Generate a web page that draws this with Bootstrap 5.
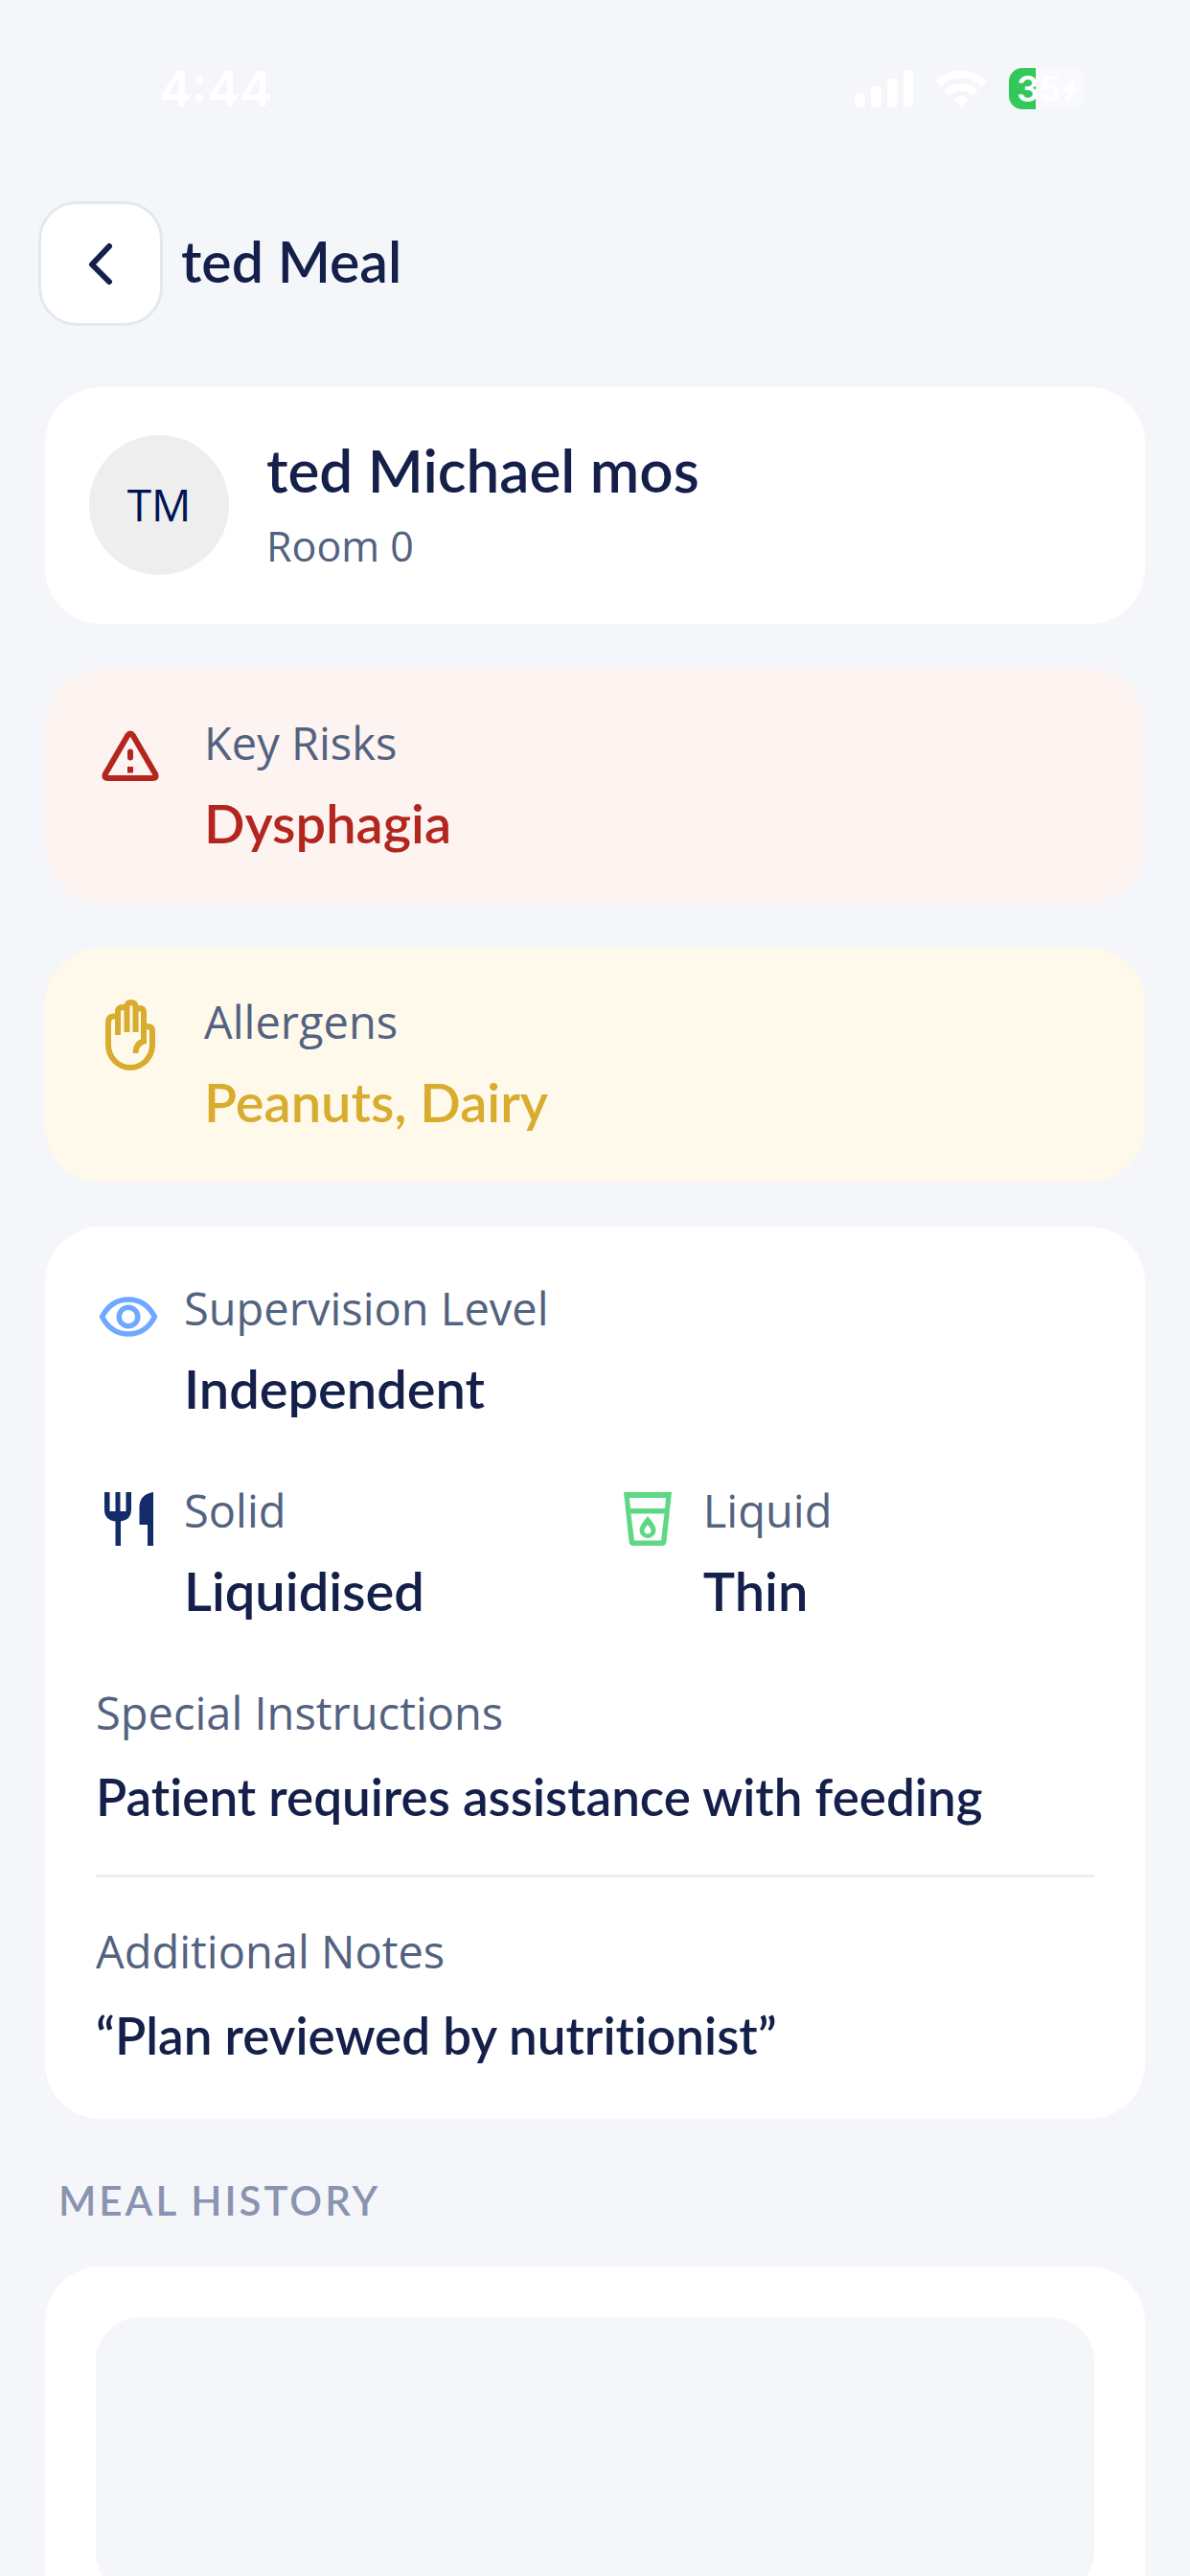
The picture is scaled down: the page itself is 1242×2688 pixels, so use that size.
<!DOCTYPE html>
<html lang="en">
<head>
<meta charset="utf-8">
<meta name="viewport" content="width=device-width, initial-scale=1">
<title>ted Meal</title>
<link href="https://cdn.jsdelivr.net/npm/bootstrap@5.3.0/dist/css/bootstrap.min.css" rel="stylesheet">
<style>
  :root { --ink: #14204a; --muted: #52627f; --page: #f4f6fa; }
  body { background: var(--page); color: var(--ink); font-family: Lato, "Open Sans", sans-serif; font-variant-ligatures: none; overflow-x: hidden; }
  .status-bar { height: 210px; padding: 63px 103px 0 166px; color: #fff; }
  .clock { font: 600 51px/60px Inter, sans-serif; }
  .status-icons { gap: 23px; padding-top: 8px; }
  .page-head { padding: 0 40px; gap: 19px; margin-bottom: 64px; }
  .back-btn { width: 130px; height: 130px; border: 3px solid #e2e8f0; border-radius: 40px; background: #fff; }
  .back-btn:hover { background: #f8fafc; border-color: #e2e8f0; }
  .page-title { font-size: 59px; line-height: 72px; font-weight: 600; padding-bottom: 4px; }
  .stack { padding: 0 47px; }
  .panel { background: #fff; border-radius: 58px; margin-bottom: 47px; }
  .person { padding: 50px 46px 51px; gap: 39px; }
  .avatar { width: 146px; height: 146px; background: #eee; color: #001452; font: 400 46px/60px "Open Sans", sans-serif; padding-bottom: 2px; }
  .person-name { font-size: 62px; line-height: 72px; font-weight: 600; margin-bottom: 16px; }
  .room { font: 400 43px/56px "Open Sans", sans-serif; color: var(--muted); }
  .alert-panel { padding: 45px 53px 47px; gap: 41px; }
  .alert-icon { width: 72px; height: 92px; }
  .risk { background: #fdf3f1; }
  .risk .item-value, .risk .alert-icon { color: #b3261e; }
  .allergen { background: #fff9eb; }
  .allergen .item-value, .allergen .alert-icon { color: #d8ac2e; }
  .item-label { font: 400 47px/64px "Open Sans", sans-serif; color: var(--muted); margin-bottom: 16px; }
  .item-value { font-size: 56px; line-height: 72px; font-weight: 600; margin: 0; }
  .plan { padding: 53px 53px 51px; }
  .item { gap: 24px; margin-bottom: 59px; }
  .item-icon { width: 68px; height: 82px; }
  .first-half { width: 52%; }
  .note .item-label { margin-bottom: 20px; }
  .note .item-value { font-size: 53px; }
  .rule { height: 3px; background: #ececec; margin: 45px 0 45px; border: 0; opacity: 1; }
  .section-title { font-size: 42px; line-height: 60px; font-weight: 600; letter-spacing: 3px; color: #8a94b0; margin: 55px 0 39px 14px; }
  .history { padding: 53px; }
  .placeholder-tile { height: 291px; border-radius: 46px; background: var(--page); }
</style>
</head>
<body>
<div class="status-bar d-flex justify-content-between align-items-start">
  <div class="clock">4:44</div>
  <div class="status-icons d-flex">
    <svg width="61" height="43" viewBox="0 0 61 43" fill="#fff" aria-hidden="true"><rect y="26" width="11" height="15" rx="4"/><rect x="17" y="19" width="11" height="22" rx="4"/><rect x="34" y="11" width="11" height="30" rx="4"/><rect x="51" y="2" width="10" height="39" rx="4"/></svg>
    <svg width="54" height="43" viewBox="0 0 54 43" fill="none" stroke="#fff" stroke-width="8" aria-hidden="true"><path d="M3 16.500A34 34 0 0 1 51 16.500"/><path d="M12 26A21.500 21.500 0 0 1 42 26"/><path d="M27 41l-8-8.500q8-7 16 0z" fill="#fff" stroke="none"/></svg>
    <svg width="86" height="43" viewBox="0 0 86 43" aria-hidden="true"><rect width="79" height="43" rx="14" fill="#f9fafd"/><path d="M28 0H14A14 14 0 0 0 0 14V29A14 14 0 0 0 14 43H28z" fill="#34c759"/><path d="M82 16q5 5.500 0 11z" fill="#f9fafd"/><text x="8" y="35" font-family="Inter, sans-serif" font-size="37" font-weight="600" fill="#fff">35</text><path d="M69 9L55 24h8l-3 12 14-16h-8z" fill="#fff"/></svg>
  </div>
</div>

<header class="page-head d-flex align-items-center">
  <button type="button" class="btn back-btn p-0 d-flex align-items-center justify-content-center" aria-label="Back">
    <svg width="28" height="46" viewBox="0 0 28 46" fill="none" stroke="#14204a" stroke-width="6" stroke-linecap="round" stroke-linejoin="round" aria-hidden="true"><path d="M23 5L5 24 23 42"/></svg>
  </button>
  <h1 class="page-title m-0">ted Meal</h1>
</header>

<main class="stack">
  <section class="panel person d-flex align-items-start">
    <div class="avatar rounded-circle d-flex align-items-center justify-content-center flex-shrink-0">TM</div>
    <div>
      <h2 class="person-name">ted Michael mos</h2>
      <div class="room">Room 0</div>
    </div>
  </section>

  <section class="panel alert-panel risk d-flex align-items-start">
    <div class="alert-icon d-flex align-items-center justify-content-center flex-shrink-0">
      <svg width="60" height="54" viewBox="0 0 60 54" fill="none" stroke="currentColor" stroke-width="6" aria-hidden="true"><path d="M27.200 5.500Q30 1.500 32.800 5.500L56 45.500Q58 50 53.500 50H6.500Q2 50 4 45.500z" stroke-linejoin="round"/><path d="M30 22.500v6" stroke-linecap="round"/><path d="M30 38v6.500"/></svg>
    </div>
    <div>
      <div class="item-label">Key Risks</div>
      <p class="item-value">Dysphagia</p>
    </div>
  </section>

  <section class="panel alert-panel allergen d-flex align-items-start">
    <div class="alert-icon d-flex align-items-center justify-content-center flex-shrink-0">
      <svg width="52" height="74" viewBox="2 0 52 74" fill="none" stroke="currentColor" stroke-width="6" aria-hidden="true"><path d="M15 37V21.500Q15 17 10.500 17.500Q5 18 5 24V47A23 24 0 0 0 51 47V33Q51 28 45.500 28H42"/><path d="M15 22V13Q15 8 20 8Q24.500 8 24.500 13V34M24.500 13V8Q24.500 3 28.500 3Q33.500 3 33.500 8V34M33.500 14Q33.500 9 38 9Q42 9 42 14V43.500Q33.500 46 33.500 56"/></svg>
    </div>
    <div>
      <div class="item-label">Allergens</div>
      <p class="item-value">Peanuts, Dairy</p>
    </div>
  </section>

  <section class="panel plan">
    <div class="item d-flex align-items-start">
      <div class="item-icon d-flex align-items-center justify-content-center flex-shrink-0">
        <svg width="62" height="44" viewBox="0 0 62 44" fill="none" stroke="#6fa8ff" stroke-width="5.500" stroke-linejoin="round" aria-hidden="true"><path d="M3.500 22Q13 4 31 4T58.500 22Q49 40 31 40T3.500 22z"/><circle cx="31" cy="22" r="9.800"/></svg>
      </div>
      <div>
        <div class="item-label">Supervision Level</div>
        <p class="item-value">Independent</p>
      </div>
    </div>
    <div class="d-flex">
      <div class="first-half item d-flex align-items-start">
        <div class="item-icon d-flex align-items-center justify-content-center flex-shrink-0">
          <svg width="51" height="56" viewBox="0 0 51 56" fill="#132c69" aria-hidden="true"><path d="M0 0h5.500v20h6V0h5v20h6V0H28v18.500q0 10.500-11 12V56h-5.500V30.500q-11.500-1.500-11.500-12zM51 0v56h-6V34h-8.500V14.500Q37.500 2 51 0z"/></svg>
        </div>
        <div>
          <div class="item-label">Solid</div>
          <p class="item-value">Liquidised</p>
        </div>
      </div>
      <div class="item d-flex align-items-start">
        <div class="item-icon d-flex align-items-center justify-content-center flex-shrink-0">
          <svg width="50" height="56" viewBox="0 0 50 56" aria-hidden="true"><path fill="#5fd884" fill-rule="evenodd" d="M0 0H50L44.500 51.500Q44 56 39.500 56H10.500Q6 56 5.500 51.500zM6 6L7 17H43L44 6zM7.500 22.500L11 50.500H39L42.500 22.500zM25 25Q33.500 35 33.500 39.500A8.500 8.500 0 0 1 16.500 39.500Q16.500 35 25 25zM25 34Q21.500 38 21.500 40A3.500 3.500 0 0 0 28.500 40Q28.500 38 25 34z"/></svg>
        </div>
        <div>
          <div class="item-label">Liquid</div>
          <p class="item-value">Thin</p>
        </div>
      </div>
    </div>
    <div class="note">
      <div class="item-label">Special Instructions</div>
      <p class="item-value">Patient requires assistance with feeding</p>
    </div>
    <hr class="rule">
    <div class="note">
      <div class="item-label">Additional Notes</div>
      <p class="item-value">“Plan reviewed by nutritionist”</p>
    </div>
  </section>

  <h2 class="section-title">MEAL HISTORY</h2>
  <section class="panel history">
    <div class="placeholder-tile"></div>
  </section>
</main>
<script src="https://cdn.jsdelivr.net/npm/bootstrap@5.3.0/dist/js/bootstrap.bundle.min.js"></script>
</body>
</html>
